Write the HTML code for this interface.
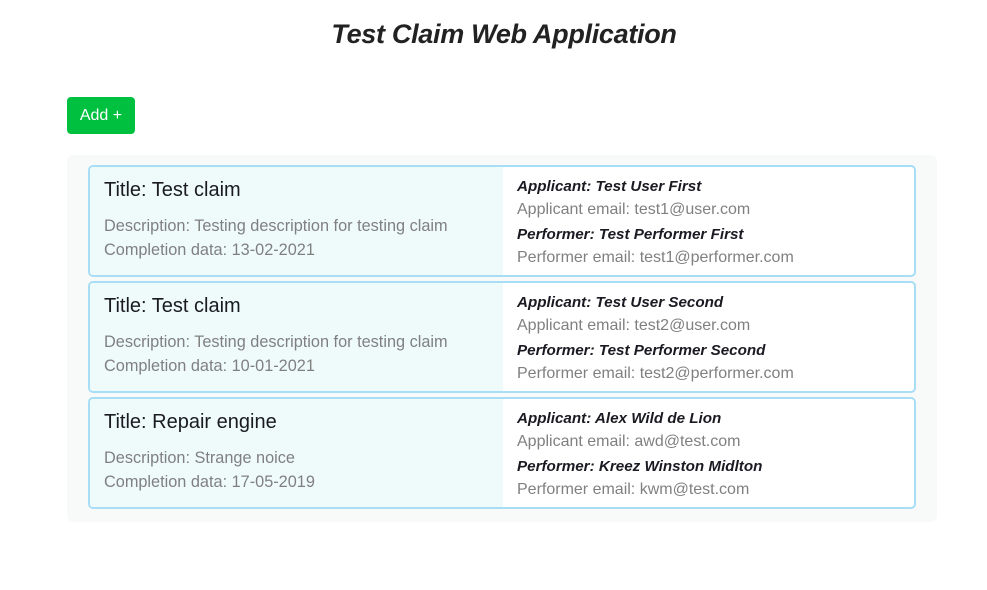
<!DOCTYPE html>
<html><head><style>
body{margin:0;background:#fff;font-family:"Liberation Sans",sans-serif;width:987px;height:590px;position:relative;overflow:hidden}
h1{position:absolute;top:19px;left:0;width:1008px;text-align:center;margin:0;font-size:27px;font-style:italic;font-weight:bold;color:#222;letter-spacing:-0.3px}
.btn{position:absolute;left:67px;top:97px;width:68px;height:37px;background:#00c040;border-radius:4px;color:#fff;font-size:16px;line-height:37px;text-align:center}
.wrap{position:absolute;left:67px;top:155px;width:870px;height:367px;background:#f8fafa;border-radius:6px}
.card{position:absolute;left:21px;width:824px;height:108px;border:2px solid #a8def5;border-radius:5px;overflow:hidden;background:#fff}
.l{position:absolute;left:0;top:0;width:413px;height:108px;background:#effbfb}
.t{position:absolute;left:14px;top:12px;font-size:20px;color:#1a1a22}
.d{position:absolute;left:14px;font-size:16.3px;color:#808080}
.r{position:absolute;left:427px;font-size:16px;color:#808080}
.r.b{font-style:italic;font-weight:bold;color:#1a1a22;font-size:15.2px}
</style></head><body>
<h1>Test Claim Web Application</h1>
<div class="btn">Add +</div>
<div class="wrap">
<div class="card" style="top:10px"><div class="l"><div class="t">Title: Test claim</div><div class="d" style="top:50px">Description: Testing description for testing claim</div><div class="d" style="top:74px">Completion data: 13-02-2021</div></div>
<div class="r b" style="top:11px">Applicant: Test User First</div><div class="r" style="top:34px">Applicant email: test1@user.com</div><div class="r b" style="top:59px">Performer: Test Performer First</div><div class="r" style="top:82px">Performer email: test1@performer.com</div></div>
<div class="card" style="top:126px"><div class="l"><div class="t">Title: Test claim</div><div class="d" style="top:50px">Description: Testing description for testing claim</div><div class="d" style="top:74px">Completion data: 10-01-2021</div></div>
<div class="r b" style="top:11px">Applicant: Test User Second</div><div class="r" style="top:34px">Applicant email: test2@user.com</div><div class="r b" style="top:59px">Performer: Test Performer Second</div><div class="r" style="top:82px">Performer email: test2@performer.com</div></div>
<div class="card" style="top:242px"><div class="l"><div class="t">Title: Repair engine</div><div class="d" style="top:50px">Description: Strange noice</div><div class="d" style="top:74px">Completion data: 17-05-2019</div></div>
<div class="r b" style="top:11px">Applicant: Alex Wild de Lion</div><div class="r" style="top:34px">Applicant email: awd@test.com</div><div class="r b" style="top:59px">Performer: Kreez Winston Midlton</div><div class="r" style="top:82px">Performer email: kwm@test.com</div></div>
</div>
</body></html>
